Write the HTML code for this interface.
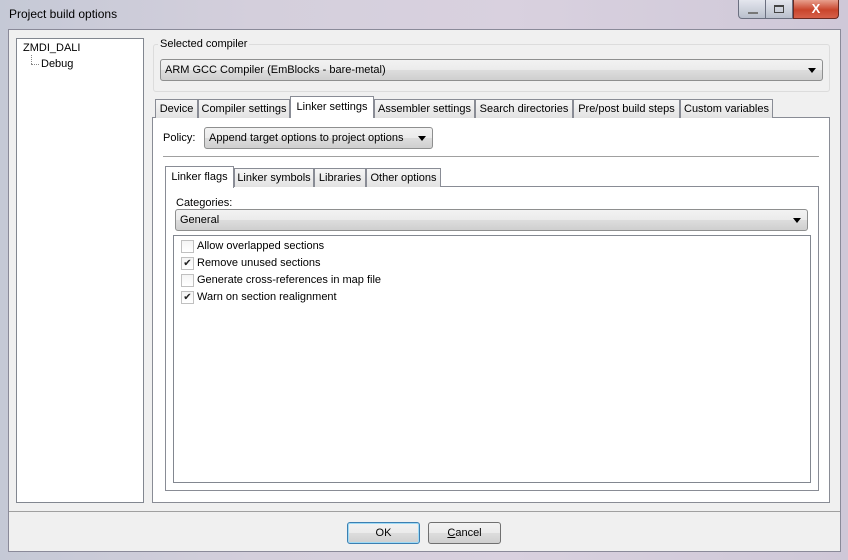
<!DOCTYPE html>
<html><head><meta charset="utf-8"><style>
*{box-sizing:border-box;margin:0;padding:0}
body{width:848px;height:560px;overflow:hidden;position:relative;font-family:"Liberation Sans",sans-serif;font-size:11px;color:#000;background:linear-gradient(90deg,#c5c9d6 0%,#d4cfdc 30%,#d9d1df 60%,#cfc8d8 100%)}
.a{position:absolute}
.t{position:absolute;white-space:nowrap;line-height:13px}
.tab{position:absolute;height:19px;background:linear-gradient(#f6f6f6,#e2e2e2);border:1px solid #898c95;border-bottom:none;text-align:center;line-height:18px;white-space:nowrap}
.tab.sel{background:#fff;height:22px;z-index:2;line-height:20px}
.combo{position:absolute;border:1px solid #8e8f8f;border-radius:3px;background:linear-gradient(#f2f2f2 0%,#ebebeb 50%,#dddddd 51%,#cfcfcf 100%);line-height:21px;padding-left:4px;white-space:nowrap}
.arr{position:absolute;right:6px;top:8px;width:0;height:0;border-left:4px solid transparent;border-right:4px solid transparent;border-top:5px solid #000}
.cb{position:absolute;width:13px;height:13px;border:1px solid #c0c0c0;background:linear-gradient(#f4f4f4,#fff)}
.btn{position:absolute;border:1px solid #707070;border-radius:3px;background:linear-gradient(#f2f2f2 0%,#ebebeb 50%,#dddddd 51%,#cfcfcf 100%);text-align:center;line-height:21px}
</style></head><body>
<div class="t" style="left:9px;top:8px;font-size:12px">Project build options</div>
<div class="a" style="left:738px;top:0;width:28px;height:19px;border:1px solid #6b6f80;border-top:none;border-radius:0 0 0 4px;background:linear-gradient(#e4e6ee,#b9bfcc)"><div class="a" style="left:9px;top:12px;width:10px;height:2px;background:#777"></div></div>
<div class="a" style="left:766px;top:0;width:27px;height:19px;border:1px solid #6b6f80;border-top:none;border-left:none;background:linear-gradient(#e4e6ee,#b9bfcc)"><div class="a" style="left:8px;top:5px;width:10px;height:8px;border:1px solid #444;border-top-width:2px"></div></div>
<div class="a" style="left:793px;top:0;width:46px;height:19px;border:1px solid #6b2a22;border-top:none;border-radius:0 0 4px 0;background:linear-gradient(#e8a08e,#c9452c 55%,#d6604a);color:#fff;font-weight:bold;font-size:13px;text-align:center;line-height:18px">X</div>

<div class="a" style="left:8px;top:29px;width:833px;height:523px;background:#f0f0f0;border:1px solid #8a8a99"></div>
<div class="a" style="left:16px;top:38px;width:128px;height:465px;background:#fff;border:1px solid #828790"></div>
<div class="t" style="left:23px;top:42px">ZMDI_DALI</div>
<div class="a" style="left:31px;top:55px;width:1px;height:9px;border-left:1px dotted #888"></div>
<div class="a" style="left:31px;top:64px;width:8px;height:1px;border-top:1px dotted #888"></div>
<div class="t" style="left:41px;top:58px">Debug</div>
<div class="a" style="left:153px;top:44px;width:677px;height:48px;border:1px solid #dcdcdc;border-radius:3px"></div>
<div class="t" style="left:158px;top:38px;background:#f0f0f0;padding:0 2px">Selected compiler</div>
<div class="combo" style="left:160px;top:59px;width:663px;height:22px">ARM GCC Compiler (EmBlocks - bare-metal)<div class="arr"></div></div>
<div class="a" style="left:152px;top:117px;width:678px;height:386px;background:#fff;border:1px solid #898c95"></div>
<div class="tab" style="left:155px;top:99px;width:43px">Device</div>
<div class="tab" style="left:198px;top:99px;width:92px">Compiler settings</div>
<div class="tab sel" style="left:290px;top:96px;width:84px">Linker settings</div>
<div class="tab" style="left:374px;top:99px;width:101px">Assembler settings</div>
<div class="tab" style="left:475px;top:99px;width:98px">Search directories</div>
<div class="tab" style="left:573px;top:99px;width:107px">Pre/post build steps</div>
<div class="tab" style="left:680px;top:99px;width:93px">Custom variables</div>
<div class="t" style="left:163px;top:132px">Policy:</div>
<div class="combo" style="left:204px;top:127px;width:229px;height:22px">Append target options to project options<div class="arr"></div></div>
<div class="a" style="left:163px;top:156px;width:656px;height:1px;background:#a0a0a0"></div>
<div class="a" style="left:165px;top:186px;width:654px;height:305px;background:#fff;border:1px solid #898c95"></div>
<div class="tab sel" style="left:165px;top:166px;width:69px">Linker flags</div>
<div class="tab" style="left:234px;top:168px;width:80px">Linker symbols</div>
<div class="tab" style="left:314px;top:168px;width:52px">Libraries</div>
<div class="tab" style="left:366px;top:168px;width:75px">Other options</div>
<div class="t" style="left:176px;top:197px">Categories:</div>
<div class="combo" style="left:175px;top:209px;width:633px;height:22px">General<div class="arr"></div></div>
<div class="a" style="left:173px;top:235px;width:638px;height:248px;border:1px solid #828790;background:#fff"></div>
<div class="cb" style="left:181px;top:240px"></div><div class="t" style="left:197px;top:240px">Allow overlapped sections</div>
<div class="cb" style="left:181px;top:257px;font-size:10px;line-height:11px;text-align:center;color:#222">✔</div><div class="t" style="left:197px;top:257px">Remove unused sections</div>
<div class="cb" style="left:181px;top:274px"></div><div class="t" style="left:197px;top:274px">Generate cross-references in map file</div>
<div class="cb" style="left:181px;top:291px;font-size:10px;line-height:11px;text-align:center;color:#222">✔</div><div class="t" style="left:197px;top:291px">Warn on section realignment</div>
<div class="a" style="left:9px;top:511px;width:831px;height:1px;background:#a0a0a0"></div>
<div class="btn" style="left:347px;top:522px;width:73px;height:22px;border-color:#3c7fb1;box-shadow:inset 0 0 0 1px #9fdaf5">OK</div>
<div class="btn" style="left:428px;top:522px;width:73px;height:22px"><u>C</u>ancel</div>
</body></html>
